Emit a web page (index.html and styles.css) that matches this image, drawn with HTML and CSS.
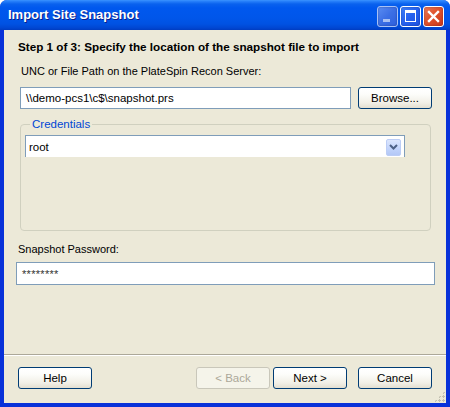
FILE: index.html
```html
<!DOCTYPE html>
<html>
<head>
<meta charset="utf-8">
<link rel="stylesheet" href="styles.css">
</head>
<body>
<div class="window">
  <div class="titlebar">
    <span class="title">Import Site Snapshot</span>
    <div class="caption-buttons">
      <div class="cbtn cbtn-min"><span class="min-bar"></span></div>
      <div class="cbtn cbtn-max"><span class="max-box"></span></div>
      <div class="cbtn cbtn-close">
        <svg width="13" height="13" viewBox="0 0 13 13"><path d="M2 2 L11 11 M11 2 L2 11" stroke="#fff" stroke-width="2.4" stroke-linecap="square"/></svg>
      </div>
    </div>
  </div>
  <div class="client">
    <div class="content">
      <div class="heading">Step 1 of 3: Specify the location of the snapshot file to import</div>
      <div class="label label-unc">UNC or File Path on the PlateSpin Recon Server:</div>
      <div class="path-row">
        <div class="textbox path-box">\\demo-pcs1\c$\snapshot.prs</div>
        <button class="btn browse-btn">Browse...</button>
      </div>
      <fieldset class="group">
        <legend class="group-legend">Credentials</legend>
        <div class="combo">
          <span class="combo-text">root</span>
          <span class="combo-arrow">
            <svg width="9" height="6" viewBox="0 0 9 6"><path d="M1 1 L4.5 4.5 L8 1" stroke="#4d6185" stroke-width="2" fill="none"/></svg>
          </span>
        </div>
      </fieldset>
      <div class="label label-pw">Snapshot Password:</div>
      <div class="textbox pw-box">********</div>
    </div>
    <div class="footer">
      <div class="separator"></div>
      <div class="button-row">
        <button class="btn">Help</button>
        <div class="nav-buttons">
          <button class="btn btn-disabled">&lt; Back</button>
          <button class="btn">Next &gt;</button>
          <button class="btn btn-cancel">Cancel</button>
        </div>
      </div>
      <div class="grip"></div>
    </div>
  </div>
</div>
</body>
</html>
```

FILE: styles.css
```css
html, body {
  margin: 0;
  padding: 0;
  background: #ffffff;
}
body {
  width: 450px;
  height: 407px;
  overflow: hidden;
  font-family: "Liberation Sans", Arial, sans-serif;
  font-size: 11px;
  color: #000;
}
.window {
  width: 450px;
  height: 407px;
  display: flex;
  flex-direction: column;
  box-sizing: border-box;
  border-radius: 7px 7px 0 0;
  overflow: hidden;
  background: #0831d9;
}
.titlebar {
  height: 30px;
  flex: none;
  display: flex;
  align-items: center;
  justify-content: space-between;
  background: linear-gradient(#3d95ff 0, #2a83fb 1px, #0a62ee 4px, #0058ee 8px, #0056ea 18px, #0052e2 24px, #0046d2 28px, #003cc0 30px);
  padding: 0 6px 0 8px;
}
.title {
  font-family: "Liberation Sans", Arial, sans-serif;
  font-weight: bold;
  font-size: 13px;
  color: #fff;
  text-shadow: 1px 1px 0 #0a1e8a;
  margin-top: -1px;
}
.caption-buttons {
  display: flex;
  gap: 2px;
  margin-top: 2px;
}
.cbtn {
  width: 19px;
  height: 19px;
  border: 1px solid #fff;
  border-radius: 3px;
  display: flex;
  align-items: center;
  justify-content: center;
  position: relative;
  box-shadow: inset 0 0 2px rgba(0,0,40,0.4);
}
.cbtn-min {
  background: linear-gradient(135deg, #5a8cf2 0%, #3c6fe5 50%, #2d5fdd 100%);
  border-color: #a8c1f5;
}
.min-bar {
  position: absolute;
  left: 5px;
  bottom: 4px;
  width: 7px;
  height: 3px;
  background: #a9c0f2;
}
.cbtn-max {
  background: linear-gradient(135deg, #3f80f7 0%, #2661ee 50%, #1e52df 100%);
}
.max-box {
  width: 9px;
  height: 8px;
  border: 1px solid #fff;
  border-top-width: 3px;
}
.cbtn-close {
  background: linear-gradient(135deg, #e8795a 0%, #e0532c 45%, #c8371a 100%);
}
.client {
  flex: 1;
  margin: 0 4px 4px 4px;
  background: #ece9d8;
  display: flex;
  flex-direction: column;
}
.content {
  display: flex;
  flex-direction: column;
  padding-top: 10px;
}
.heading {
  font-weight: bold;
  font-size: 11.7px;
  line-height: 14px;
  margin-left: 14px;
}
.label {
  line-height: 14px;
}
.label-unc {
  margin-top: 10px;
  margin-left: 17px;
}
.path-row {
  display: flex;
  margin-top: 9px;
  margin-left: 16px;
  gap: 7px;
}
.textbox {
  box-sizing: border-box;
  background: #fff;
  border: 1px solid #7f9db9;
  padding-left: 5px;
  display: flex;
  align-items: center;
  font-size: 11.5px;
}
.path-box {
  width: 331px;
  height: 22px;
}
.btn {
  width: 74px;
  height: 22px;
  box-sizing: border-box;
  border: 1px solid #003c74;
  border-radius: 3px;
  background: linear-gradient(#ffffff 0, #fdfdfb 30%, #f1efe6 75%, #e3ded0 100%);
  font-family: "Liberation Sans", Arial, sans-serif;
  font-size: 11.5px;
  color: #000;
  padding: 0;
  margin: 0;
}
.browse-btn {
  width: 74px;
}
.group {
  margin: 8px 0 0 16px;
  width: 411px;
  box-sizing: border-box;
  border: 1px solid #d0d0bf;
  border-radius: 4px;
  padding: 4px 0 73px 4px;
}
.group-legend {
  color: #0046d5;
  padding: 0 2px;
  margin-left: 5px;
  line-height: 14px;
  font-size: 11.5px;
}
.combo {
  width: 380px;
  height: 22px;
  box-sizing: border-box;
  background: #fff;
  border: 1px solid #7f9db9;
  border-bottom: none;
  display: flex;
  align-items: center;
  justify-content: space-between;
  padding: 0 3px 0 3px;
}
.combo-text {
  font-size: 11.5px;
}
.combo-arrow {
  width: 15px;
  height: 17px;
  margin-top: 1px;
  border-radius: 2px;
  background: linear-gradient(#dce6fd, #c1d3fb 60%, #b4c8f6);
  border: 1px solid #bccdf5;
  box-sizing: border-box;
  display: flex;
  align-items: center;
  justify-content: center;
}
.label-pw {
  margin-top: 11px;
  margin-left: 14px;
}
.pw-box {
  margin-top: 6px;
  margin-left: 12px;
  width: 419px;
  height: 23px;
  font-size: 11px;
  color: #333;
  letter-spacing: 0.3px;
}
.footer {
  margin-top: auto;
  position: relative;
}
.separator {
  height: 1px;
  background: #aca899;
  border-bottom: 1px solid #fff;
}
.button-row {
  display: flex;
  justify-content: space-between;
  padding: 11px 14px 14px 14px;
}
.nav-buttons {
  display: flex;
  gap: 3px;
}
.btn-cancel {
  margin-left: 8px;
}
.btn-disabled {
  border-color: #c9c7ba;
  color: #aca899;
  background: #f5f4ea;
}
.grip {
  position: absolute;
  right: 1px;
  bottom: 1px;
  width: 11px;
  height: 11px;
  background:
    radial-gradient(circle at 1.5px 1.5px, #c2bfb0 1px, transparent 1.2px) 0 0 / 4px 4px;
  clip-path: polygon(100% 0, 100% 100%, 0 100%);
}
```
